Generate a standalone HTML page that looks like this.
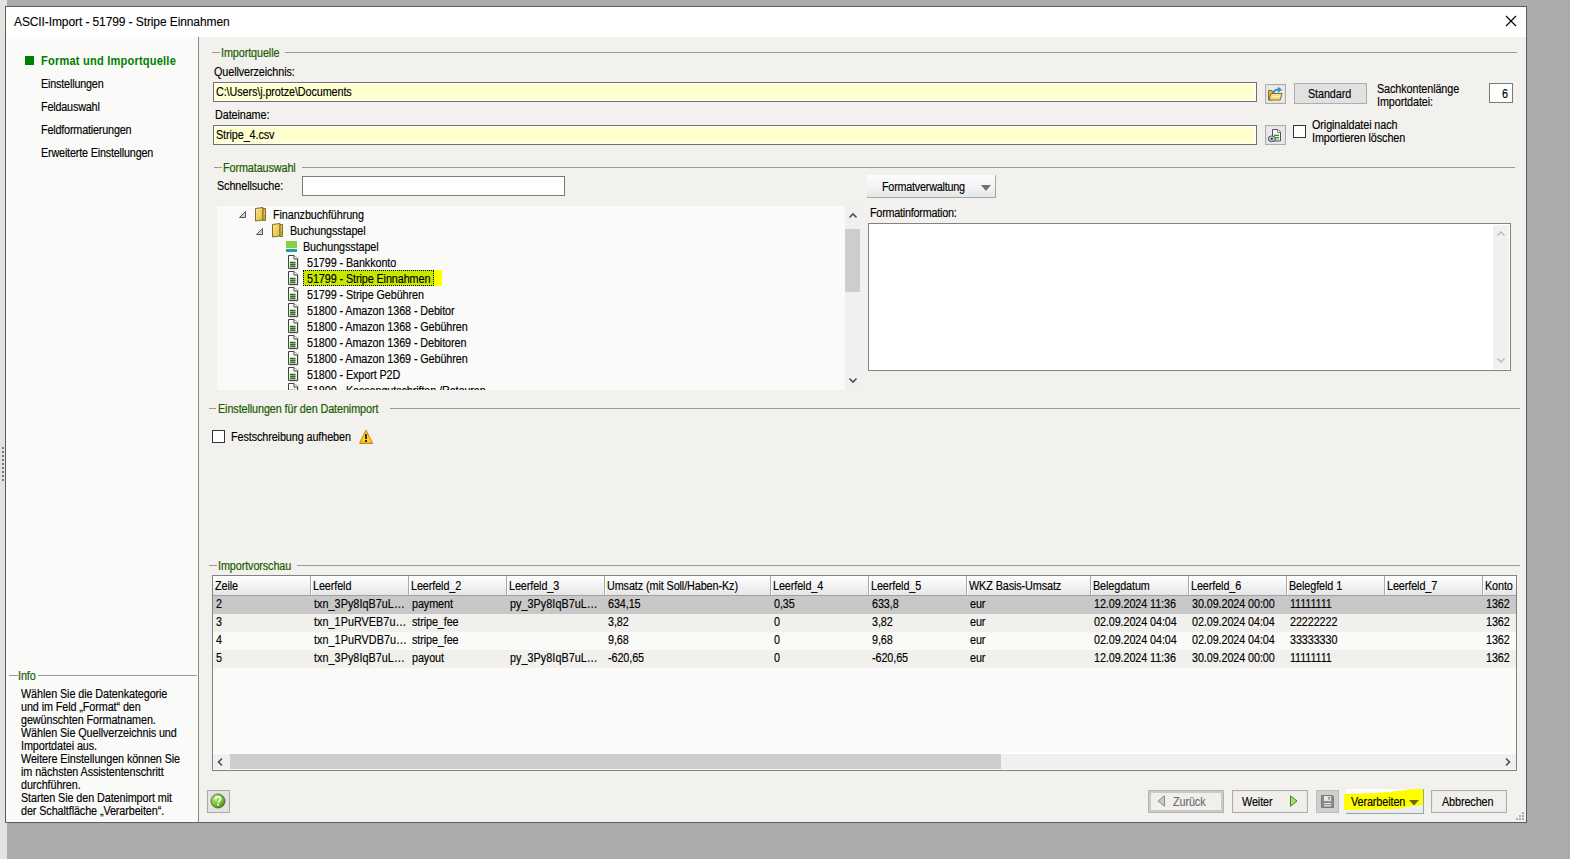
<!DOCTYPE html>
<html><head><meta charset="utf-8">
<style>
*{box-sizing:border-box;margin:0;padding:0}
html,body{width:1570px;height:859px;overflow:hidden;background:#ababab;position:relative;font-family:"Liberation Sans",sans-serif}
.a{position:absolute}
.t{position:absolute;font-size:12px;line-height:13px;letter-spacing:-0.1px;white-space:nowrap;color:#000;-webkit-text-stroke:0.15px #000;transform:scaleX(0.9);transform-origin:0 0}
.g{color:#1a5c00;-webkit-text-stroke:0.2px #1a5c00}
.hl{position:absolute;height:1px;background:#989898}
.vl{position:absolute;width:1px}
.inp{position:absolute;border:1px solid #707070;background:#ffffd0;box-shadow:inset 0 0 0 1px #fff}
.btn{position:absolute;border:1px solid #adadad;background:#e1e1e1}
.cb{position:absolute;width:13px;height:13px;border:1px solid #333;background:#fff}
</style></head><body>
<svg width="0" height="0" style="position:absolute">
<defs>
<linearGradient id="docg" x1="0" y1="0" x2="0" y2="1"><stop offset="0" stop-color="#ffffff"/><stop offset="1" stop-color="#e4e4ee"/></linearGradient>
<linearGradient id="foldg" x1="0" y1="0" x2="1" y2="1"><stop offset="0" stop-color="#fbe898"/><stop offset="1" stop-color="#e0b840"/></linearGradient>
<symbol id="doc" viewBox="0 0 12 15"><path d="M0.5 0.5H6L9.5 4V13.5H0.5z" fill="url(#docg)" stroke="#404040" stroke-width="1"/><path d="M6 0.5V4H9.5" fill="#fff" stroke="#404040" stroke-width="1"/><path d="M2 7.5h5.5M2 9.5h5.5M2 11.5h5.5" stroke="#2e7012" stroke-width="1.3"/><path d="M1 14.5h9M10.5 1.5v13" stroke="#e0e0e0" stroke-width="1"/></symbol>
<symbol id="fold" viewBox="0 0 13 15"><path d="M0.5 1.5l7.5-1v12.5l-7.5 1z" fill="url(#foldg)" stroke="#8a6a20" stroke-width="1"/><path d="M8 1.5h2.5v12h-2.5z" fill="#e8c450" stroke="#8a6a20" stroke-width="1"/><rect x="8.6" y="8" width="1.6" height="4" fill="#78c830"/></symbol>
</defs></svg>
<!-- left light strip -->
<div class="a" style="left:0;top:0;width:7px;height:859px;background:#e3e3e1"></div>
<!-- dialog -->
<div class="a" style="left:5px;top:6px;width:1522px;height:817px;border:1px solid #5c5c5c;background:#f2f1ed"></div>
<!-- title bar -->
<div class="a" style="left:6px;top:7px;width:1520px;height:30px;background:#fff"></div>
<div class="t" style="left:14px;top:15px;font-size:12px;line-height:14px;letter-spacing:-0.1px;transform:none;-webkit-text-stroke:0.1px #000">ASCII-Import - 51799 - Stripe Einnahmen</div>
<svg class="a" style="left:1505px;top:15px" width="12" height="12"><path d="M1 1L11 11M11 1L1 11" stroke="#000" stroke-width="1.1"/></svg>

<!-- left panel -->
<div class="a" style="left:6px;top:37px;width:192px;height:785px;background:#fafaf8"></div>
<div class="a" style="left:198px;top:37px;width:1px;height:785px;background:#8a8a8a"></div>
<div class="a" style="left:25px;top:56px;width:9px;height:9px;background:#008000"></div>
<div class="t" style="left:41px;top:55px;font-size:12px;font-weight:bold;color:#008000;letter-spacing:0.2px;-webkit-text-stroke:0;transform:scaleX(0.925)">Format und Importquelle</div>
<div class="t" style="left:41px;top:78px;letter-spacing:-0.2px">Einstellungen</div>
<div class="t" style="left:41px;top:101px;letter-spacing:-0.2px">Feldauswahl</div>
<div class="t" style="left:41px;top:124px;letter-spacing:-0.2px">Feldformatierungen</div>
<div class="t" style="left:41px;top:147px;letter-spacing:-0.2px">Erweiterte Einstellungen</div>

<!-- info -->
<div class="hl" style="left:9px;top:675px;width:9px"></div>
<div class="hl" style="left:38px;top:675px;width:159px"></div>
<div class="t g" style="left:18px;top:670px">Info</div>
<div class="t" style="left:21px;top:688px;line-height:13px">Wählen Sie die Datenkategorie<br>und im Feld „Format“ den<br>gewünschten Formatnamen.<br>Wählen Sie Quellverzeichnis und<br>Importdatei aus.<br>Weitere Einstellungen können Sie<br>im nächsten Assistentenschritt<br>durchführen.<br>Starten Sie den Datenimport mit<br>der Schaltfläche „Verarbeiten“.</div>

<!-- grip dots on left strip -->
<svg class="a" style="left:1px;top:446px" width="4" height="36">
<g fill="#7a7a7a"><rect x="1" y="1" width="2" height="2"/><rect x="1" y="5" width="2" height="2"/><rect x="1" y="9" width="2" height="2"/><rect x="1" y="13" width="2" height="2"/><rect x="1" y="17" width="2" height="2"/><rect x="1" y="21" width="2" height="2"/><rect x="1" y="25" width="2" height="2"/><rect x="1" y="29" width="2" height="2"/><rect x="1" y="33" width="2" height="2"/></g></svg>

<!-- ===== Importquelle ===== -->
<div class="hl" style="left:212px;top:52px;width:8px"></div>
<div class="hl" style="left:285px;top:52px;width:1232px"></div>
<div class="t g" style="left:221px;top:47px">Importquelle</div>
<div class="t" style="left:214px;top:66px">Quellverzeichnis:</div>
<div class="inp" style="left:213px;top:82px;width:1044px;height:20px"></div>
<div class="t" style="left:216px;top:86px">C:\Users\j.protze\Documents</div>
<div class="t" style="left:215px;top:109px">Dateiname:</div>
<div class="inp" style="left:213px;top:125px;width:1044px;height:20px"></div>
<div class="t" style="left:216px;top:129px">Stripe_4.csv</div>


<!-- right of inputs -->
<div class="a" style="left:1265px;top:84px;width:21px;height:20px;border:1px solid #adadad;background:#e9e9e9;box-shadow:inset 0 0 0 1px #e2e2e2"></div>
<svg class="a" style="left:1267px;top:86px" width="16" height="15" viewBox="0 0 16 15">
 <path d="M1.5 4.5h3.5l0.5 1v8.5h-4z" fill="#e0bc50" stroke="#8a6a20" stroke-width="1"/>
 <path d="M4 7.5h11l-1.8 6.5h-11.2z" fill="#f2de88" stroke="#8a6a20" stroke-width="1"/>
 <path d="M4.5 10.5h8" stroke="#fff4c0" stroke-width="1"/>
 <path d="M6 7.2Q7.5 3.8 11.5 3.6" fill="none" stroke="#3a90c8" stroke-width="2"/>
 <path d="M11 0.8L15 3.8 11 7z" fill="#3a90c8"/>
</svg>
<div class="btn" style="left:1294px;top:83px;width:73px;height:21px"></div>
<div class="t" style="left:1308px;top:88px">Standard</div>
<div class="t" style="left:1377px;top:83px">Sachkontenlänge</div>
<div class="t" style="left:1377px;top:96px">Importdatei:</div>
<div class="a" style="left:1489px;top:83px;width:24px;height:20px;border:1px solid #7a7a7a;background:#fff"></div>
<div class="t" style="left:1502px;top:88px">6</div>

<div class="a" style="left:1265px;top:125px;width:21px;height:20px;border:1px solid #adadad;background:#e9e9e9;box-shadow:inset 0 0 0 1px #e2e2e2"></div>
<svg class="a" style="left:1267px;top:127px" width="16" height="16" viewBox="0 0 16 16">
 <path d="M5.5 2.5h5.5l2.5 2.5v9h-8z" fill="#f6f6fa" stroke="#505050" stroke-width="1"/>
 <path d="M10.5 2.5v3h3" fill="#ddd" stroke="#707070" stroke-width="0.8"/>
 <path d="M7 8.3h5M7 10.6h5" stroke="#3c8a10" stroke-width="1.2"/>
 <path d="M7 12.6h5" stroke="#a0c890" stroke-width="1"/>
 <ellipse cx="4.8" cy="11.8" rx="3.7" ry="2.9" fill="#b0c8d4" stroke="#4a5a6a" stroke-width="1"/>
 <circle cx="4.8" cy="11.8" r="1.1" fill="#303840"/>
</svg>
<div class="cb" style="left:1293px;top:125px"></div>
<div class="t" style="left:1312px;top:119px">Originaldatei nach</div>
<div class="t" style="left:1312px;top:132px">Importieren löschen</div>

<!-- ===== Formatauswahl ===== -->
<div class="hl" style="left:214px;top:167px;width:8px"></div>
<div class="hl" style="left:302px;top:167px;width:1213px"></div>
<div class="t g" style="left:223px;top:162px">Formatauswahl</div>
<div class="t" style="left:217px;top:180px">Schnellsuche:</div>
<div class="a" style="left:302px;top:176px;width:263px;height:20px;border:1px solid #7a7a7a;background:#fff"></div>


<!-- tree -->
<div class="a" style="left:217px;top:206px;width:628px;height:184px;background:#fafaf8;overflow:hidden">
<svg class="a" style="left:22px;top:5px" width="8" height="8"><path d="M0.5 6.5L6.5 0.5V6.5z" fill="#d0d0d0" stroke="#585858" stroke-width="1"/></svg><svg class="a" style="left:38px;top:1px" width="13" height="15"><use href="#fold"/></svg><div class="t" style="left:56px;top:3px">Finanzbuchführung</div><svg class="a" style="left:39px;top:22px" width="8" height="8"><path d="M0.5 6.5L6.5 0.5V6.5z" fill="#d0d0d0" stroke="#585858" stroke-width="1"/></svg><svg class="a" style="left:55px;top:17px" width="13" height="15"><use href="#fold"/></svg><div class="t" style="left:73px;top:19px">Buchungsstapel</div><div class="a" style="left:69px;top:35px;width:11px;height:7px;background:#88d048"></div><div class="a" style="left:69px;top:43px;width:11px;height:3px;background:#20a0a0"></div><div class="t" style="left:86px;top:35px">Buchungsstapel</div><svg class="a" style="left:71px;top:49px" width="12" height="15"><use href="#doc"/></svg><div class="t" style="left:90px;top:51px">51799 - Bankkonto</div><svg class="a" style="left:71px;top:65px" width="12" height="15"><use href="#doc"/></svg><div class="a" style="left:86px;top:64px;width:139px;height:16px;background:#ffff00"></div><div class="a" style="left:86px;top:64px;width:131px;height:16px;background:#c8e600;border:1px dotted #000"></div><div class="t" style="left:90px;top:67px">51799 - Stripe Einnahmen</div><svg class="a" style="left:71px;top:81px" width="12" height="15"><use href="#doc"/></svg><div class="t" style="left:90px;top:83px">51799 - Stripe Gebühren</div><svg class="a" style="left:71px;top:97px" width="12" height="15"><use href="#doc"/></svg><div class="t" style="left:90px;top:99px">51800 - Amazon 1368 - Debitor</div><svg class="a" style="left:71px;top:113px" width="12" height="15"><use href="#doc"/></svg><div class="t" style="left:90px;top:115px">51800 - Amazon 1368 - Gebühren</div><svg class="a" style="left:71px;top:129px" width="12" height="15"><use href="#doc"/></svg><div class="t" style="left:90px;top:131px">51800 - Amazon 1369 - Debitoren</div><svg class="a" style="left:71px;top:145px" width="12" height="15"><use href="#doc"/></svg><div class="t" style="left:90px;top:147px">51800 - Amazon 1369 - Gebühren</div><svg class="a" style="left:71px;top:161px" width="12" height="15"><use href="#doc"/></svg><div class="t" style="left:90px;top:163px">51800 - Export P2D</div><svg class="a" style="left:71px;top:177px" width="12" height="15"><use href="#doc"/></svg><div class="t" style="left:90px;top:179px">51800 - Kassengutschriften /Retouren</div></div>
<div class="a" style="left:845px;top:206px;width:16px;height:184px;background:#f0f0f0"></div>
<div class="a" style="left:845px;top:229px;width:15px;height:63px;background:#cdcdcd"></div>
<svg class="a" style="left:848px;top:211px" width="10" height="8"><path d="M1.5 6.5L5 3 8.5 6.5" fill="none" stroke="#505050" stroke-width="1.6"/></svg>
<svg class="a" style="left:848px;top:377px" width="10" height="8"><path d="M1.5 1.5L5 5 8.5 1.5" fill="none" stroke="#505050" stroke-width="1.6"/></svg>
<!-- format verwaltung -->
<div class="a" style="left:867px;top:175px;width:129px;height:23px;background:linear-gradient(#fdfdfd,#f2f2f2 60%,#e6e6e6);border-right:1px solid #98acb0;border-bottom:1px solid #98acb0"></div>
<div class="t" style="left:882px;top:181px;letter-spacing:-0.25px">Formatverwaltung</div>
<svg class="a" style="left:980px;top:184px" width="12" height="8"><path d="M1 1h10L6 7z" fill="#707070"/></svg>
<div class="t" style="left:870px;top:207px;letter-spacing:-0.25px">Formatinformation:</div>
<div class="a" style="left:868px;top:223px;width:643px;height:148px;border:1px solid #828282;background:#fff"></div>
<div class="a" style="left:1493px;top:225px;width:16px;height:144px;background:#f0f0f0"></div>
<svg class="a" style="left:1496px;top:229px" width="10" height="8"><path d="M1.5 6.5L5 3 8.5 6.5" fill="none" stroke="#b8b8b8" stroke-width="1.4"/></svg>
<svg class="a" style="left:1496px;top:357px" width="10" height="8"><path d="M1.5 1.5L5 5 8.5 1.5" fill="none" stroke="#b8b8b8" stroke-width="1.4"/></svg>

<!-- ===== Einstellungen ===== -->
<div class="hl" style="left:209px;top:408px;width:7px"></div>
<div class="hl" style="left:390px;top:408px;width:1130px"></div>
<div class="t g" style="left:218px;top:403px">Einstellungen für den Datenimport</div>
<div class="cb" style="left:212px;top:430px"></div>
<div class="t" style="left:231px;top:431px">Festschreibung aufheben</div>
<svg class="a" style="left:359px;top:429px" width="15" height="16" viewBox="0 0 15 16">
<defs><linearGradient id="wg" x1="0" y1="0" x2="0" y2="1"><stop offset="0" stop-color="#ffe030"/><stop offset="1" stop-color="#f8cc10"/></linearGradient></defs>
<path d="M7 1.2L13.6 14.3H0.6z" fill="url(#wg)" stroke="#d88a20" stroke-width="1.1" stroke-linejoin="round"/>
<path d="M1 14.5H13.4" stroke="#e07818" stroke-width="1"/>
<rect x="6" y="5" width="2" height="5" fill="#302800"/><rect x="6" y="11" width="2" height="2" fill="#302800"/></svg>

<!-- ===== Importvorschau ===== -->
<div class="hl" style="left:209px;top:565px;width:8px"></div>
<div class="hl" style="left:297px;top:565px;width:1223px"></div>
<div class="t g" style="left:218px;top:560px">Importvorschau</div>


<!-- table -->
<div class="a" style="left:212px;top:575px;width:1305px;height:196px;border:1px solid #828282;background:#fafaf8;overflow:hidden">
<div class="a" style="left:0;top:0;width:1400px;height:19px;background:linear-gradient(#fefefe,#f3f3f3 50%,#e6e6e6)"></div><div class="a" style="left:0;top:19px;width:1400px;height:1px;background:#a0a0a0"></div><div class="a" style="left:97px;top:0;width:1px;height:19px;background:#a8a8a8"></div><div class="a" style="left:98px;top:0;width:1px;height:19px;background:#fff"></div><div class="a" style="left:195px;top:0;width:1px;height:19px;background:#a8a8a8"></div><div class="a" style="left:196px;top:0;width:1px;height:19px;background:#fff"></div><div class="a" style="left:293px;top:0;width:1px;height:19px;background:#a8a8a8"></div><div class="a" style="left:294px;top:0;width:1px;height:19px;background:#fff"></div><div class="a" style="left:391px;top:0;width:1px;height:19px;background:#a8a8a8"></div><div class="a" style="left:392px;top:0;width:1px;height:19px;background:#fff"></div><div class="a" style="left:557px;top:0;width:1px;height:19px;background:#a8a8a8"></div><div class="a" style="left:558px;top:0;width:1px;height:19px;background:#fff"></div><div class="a" style="left:655px;top:0;width:1px;height:19px;background:#a8a8a8"></div><div class="a" style="left:656px;top:0;width:1px;height:19px;background:#fff"></div><div class="a" style="left:753px;top:0;width:1px;height:19px;background:#a8a8a8"></div><div class="a" style="left:754px;top:0;width:1px;height:19px;background:#fff"></div><div class="a" style="left:877px;top:0;width:1px;height:19px;background:#a8a8a8"></div><div class="a" style="left:878px;top:0;width:1px;height:19px;background:#fff"></div><div class="a" style="left:975px;top:0;width:1px;height:19px;background:#a8a8a8"></div><div class="a" style="left:976px;top:0;width:1px;height:19px;background:#fff"></div><div class="a" style="left:1073px;top:0;width:1px;height:19px;background:#a8a8a8"></div><div class="a" style="left:1074px;top:0;width:1px;height:19px;background:#fff"></div><div class="a" style="left:1171px;top:0;width:1px;height:19px;background:#a8a8a8"></div><div class="a" style="left:1172px;top:0;width:1px;height:19px;background:#fff"></div><div class="a" style="left:1269px;top:0;width:1px;height:19px;background:#a8a8a8"></div><div class="a" style="left:1270px;top:0;width:1px;height:19px;background:#fff"></div><div class="t" style="left:2px;top:4px">Zeile</div><div class="t" style="left:100px;top:4px">Leerfeld</div><div class="t" style="left:198px;top:4px">Leerfeld_2</div><div class="t" style="left:296px;top:4px">Leerfeld_3</div><div class="t" style="left:394px;top:4px">Umsatz (mit Soll/Haben-Kz)</div><div class="t" style="left:560px;top:4px">Leerfeld_4</div><div class="t" style="left:658px;top:4px">Leerfeld_5</div><div class="t" style="left:756px;top:4px">WKZ Basis-Umsatz</div><div class="t" style="left:880px;top:4px">Belegdatum</div><div class="t" style="left:978px;top:4px">Leerfeld_6</div><div class="t" style="left:1076px;top:4px">Belegfeld 1</div><div class="t" style="left:1174px;top:4px">Leerfeld_7</div><div class="t" style="left:1272px;top:4px">Konto</div><div class="a" style="left:0;top:20px;width:1400px;height:18px;background:#c8c8c8"></div><div class="t" style="left:3px;top:22px">2</div><div class="t" style="left:101px;top:22px;letter-spacing:0.05px">txn_3Py8IqB7uL…</div><div class="t" style="left:199px;top:22px">payment</div><div class="t" style="left:297px;top:22px;letter-spacing:0.05px">py_3Py8IqB7uL…</div><div class="t" style="left:395px;top:22px">634,15</div><div class="t" style="left:561px;top:22px">0,35</div><div class="t" style="left:659px;top:22px">633,8</div><div class="t" style="left:757px;top:22px">eur</div><div class="t" style="left:881px;top:22px">12.09.2024 11:36</div><div class="t" style="left:979px;top:22px">30.09.2024 00:00</div><div class="t" style="left:1077px;top:22px">11111111</div><div class="t" style="left:1273px;top:22px">1362</div><div class="a" style="left:0;top:38px;width:1400px;height:18px;background:#f1f0ed"></div><div class="t" style="left:3px;top:40px">3</div><div class="t" style="left:101px;top:40px;letter-spacing:0.05px">txn_1PuRVEB7u…</div><div class="t" style="left:199px;top:40px">stripe_fee</div><div class="t" style="left:395px;top:40px">3,82</div><div class="t" style="left:561px;top:40px">0</div><div class="t" style="left:659px;top:40px">3,82</div><div class="t" style="left:757px;top:40px">eur</div><div class="t" style="left:881px;top:40px">02.09.2024 04:04</div><div class="t" style="left:979px;top:40px">02.09.2024 04:04</div><div class="t" style="left:1077px;top:40px">22222222</div><div class="t" style="left:1273px;top:40px">1362</div><div class="a" style="left:0;top:56px;width:1400px;height:18px;background:#fafaf8"></div><div class="t" style="left:3px;top:58px">4</div><div class="t" style="left:101px;top:58px;letter-spacing:0.05px">txn_1PuRVDB7u…</div><div class="t" style="left:199px;top:58px">stripe_fee</div><div class="t" style="left:395px;top:58px">9,68</div><div class="t" style="left:561px;top:58px">0</div><div class="t" style="left:659px;top:58px">9,68</div><div class="t" style="left:757px;top:58px">eur</div><div class="t" style="left:881px;top:58px">02.09.2024 04:04</div><div class="t" style="left:979px;top:58px">02.09.2024 04:04</div><div class="t" style="left:1077px;top:58px">33333330</div><div class="t" style="left:1273px;top:58px">1362</div><div class="a" style="left:0;top:74px;width:1400px;height:18px;background:#f1f0ed"></div><div class="t" style="left:3px;top:76px">5</div><div class="t" style="left:101px;top:76px;letter-spacing:0.05px">txn_3Py8IqB7uL…</div><div class="t" style="left:199px;top:76px">payout</div><div class="t" style="left:297px;top:76px;letter-spacing:0.05px">py_3Py8IqB7uL…</div><div class="t" style="left:395px;top:76px">-620,65</div><div class="t" style="left:561px;top:76px">0</div><div class="t" style="left:659px;top:76px">-620,65</div><div class="t" style="left:757px;top:76px">eur</div><div class="t" style="left:881px;top:76px">12.09.2024 11:36</div><div class="t" style="left:979px;top:76px">30.09.2024 00:00</div><div class="t" style="left:1077px;top:76px">11111111</div><div class="t" style="left:1273px;top:76px">1362</div><div class="a" style="left:0;top:177px;width:1303px;height:1px;background:#fff"></div><div class="a" style="left:0;top:178px;width:1303px;height:15px;background:#f0f0f0"></div><div class="a" style="left:17px;top:178px;width:771px;height:15px;background:#cdcdcd"></div><svg class="a" style="left:3px;top:181px" width="8" height="10"><path d="M6 1.5L2.5 5 6 8.5" fill="none" stroke="#505050" stroke-width="1.6"/></svg><svg class="a" style="left:1291px;top:181px" width="8" height="10"><path d="M2 1.5L5.5 5 2 8.5" fill="none" stroke="#505050" stroke-width="1.6"/></svg></div>

<!-- bottom buttons -->
<div class="a" style="left:207px;top:790px;width:23px;height:23px;border:1px solid #a8a8a8;background:#e3e3e3"></div>
<svg class="a" style="left:210px;top:793px" width="17" height="17" viewBox="0 0 17 17">
<defs><radialGradient id="hg" cx="0.35" cy="0.3" r="0.8"><stop offset="0" stop-color="#b8f090"/><stop offset="0.6" stop-color="#78b838"/><stop offset="1" stop-color="#3a7a10"/></radialGradient></defs>
<circle cx="8" cy="8" r="7" fill="url(#hg)" stroke="#3a7010" stroke-width="0.8"/>
<path d="M5.6 6.2c0-1.6 1.1-2.5 2.5-2.5s2.5 0.9 2.5 2.3c0 1.6-2 1.8-2 3.6" fill="none" stroke="#fff" stroke-width="1.6"/>
<rect x="7.3" y="10.8" width="1.7" height="1.7" fill="#fff"/></svg>

<div class="a" style="left:1148px;top:790px;width:76px;height:23px;border:1px solid #b4b4b4;box-shadow:inset 0 0 0 2px #cacaca;background:#f0efec"></div>
<svg class="a" style="left:1157px;top:795px" width="9" height="12"><path d="M7.5 0.8v10.4L1 6z" fill="#c8c8c8" stroke="#8a8a8a" stroke-width="1"/></svg>
<div class="t" style="left:1173px;top:796px;color:#6d6d6d;-webkit-text-stroke:0.15px #6d6d6d">Zurück</div>

<div class="a" style="left:1232px;top:790px;width:76px;height:23px;border:1px solid #adadad;box-shadow:inset 0 0 0 1px #e8e8e8;background:#f0efec"></div>
<div class="t" style="left:1242px;top:796px">Weiter</div>
<svg class="a" style="left:1289px;top:795px" width="9" height="12"><path d="M1.5 0.8v10.4L8 6z" fill="#a8e070" stroke="#3a8a10" stroke-width="1"/></svg>

<div class="a" style="left:1316px;top:790px;width:23px;height:23px;border:1px solid #bcbcbc;background:#cfcfcf"></div>
<svg class="a" style="left:1321px;top:795px" width="13" height="13" viewBox="0 0 13 13">
<path d="M0.5 0.5h11l1 1v11h-12z" fill="#8c8c8c" stroke="#7a7a7a" stroke-width="1"/>
<rect x="3" y="1" width="7" height="5" fill="#e6e6e6"/><rect x="7.3" y="1.8" width="1.6" height="2.8" fill="#8a8a8a"/>
<rect x="3" y="8" width="7" height="1.2" fill="#e0e0e0"/><rect x="3" y="10.2" width="7" height="1.2" fill="#e0e0e0"/></svg>

<div class="a" style="left:1346px;top:789px;width:78px;height:25px;background:linear-gradient(#fdfdfd,#f3f3f3 60%,#e8e8e8);border-right:1px solid #8fa8b0;border-bottom:1px solid #8fa8b0"></div>
<svg class="a" style="left:1343px;top:788px" width="82" height="24"><path d="M1 6L34 5 54 3 69 1H80V17L69 18 54 21 1 22z" fill="#ffff00"/></svg>
<div class="t" style="left:1351px;top:796px">Verarbeiten</div>
<svg class="a" style="left:1408px;top:799px" width="12" height="8"><path d="M1 1h10L6 6.5z" fill="#6a6a00"/></svg>

<div class="a" style="left:1431px;top:790px;width:76px;height:23px;border:1px solid #adadad;box-shadow:inset 0 0 0 1px #e8e8e8;background:#f0efec"></div>
<div class="t" style="left:1442px;top:796px">Abbrechen</div>

<svg class="a" style="left:1516px;top:812px" width="10" height="9"><g fill="#acacac"><rect x="6" y="0" width="2" height="2"/><rect x="3" y="3" width="2" height="2"/><rect x="6" y="3" width="2" height="2"/><rect x="0" y="6" width="2" height="2"/><rect x="3" y="6" width="2" height="2"/><rect x="6" y="6" width="2" height="2"/></g></svg>
</body></html>
